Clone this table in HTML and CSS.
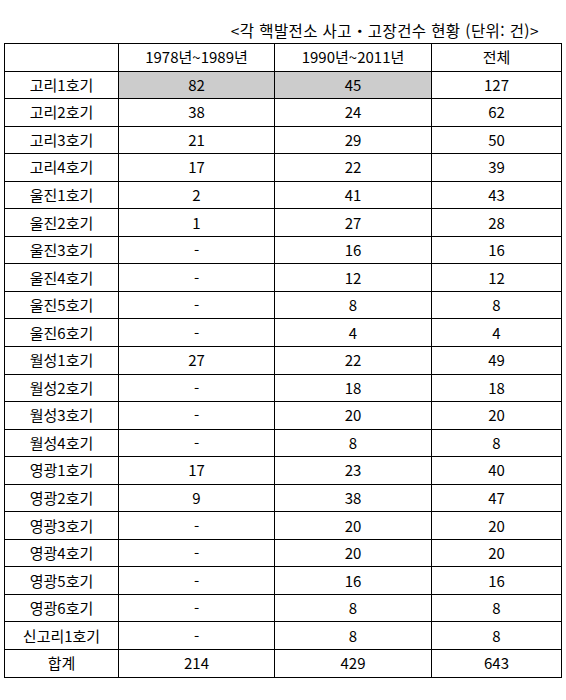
FILE: index.html
```html
<!DOCTYPE html>
<html lang="ko">
<head>
<meta charset="utf-8">
<link rel="stylesheet" href="styles.css">
</head>
<body>
<div class="page">
  <div class="caption">&lt;각 핵발전소 사고・고장건수 현황 (단위: 건)&gt;</div>
  <table class="stats">
    <colgroup>
      <col class="c1"><col class="c2"><col class="c3"><col class="c4">
    </colgroup>
    <tr><td></td><td>1978년~1989년</td><td>1990년~2011년</td><td>전체</td></tr>
    <tr><td>고리1호기</td><td class="hl">82</td><td class="hl">45</td><td>127</td></tr>
    <tr><td>고리2호기</td><td>38</td><td>24</td><td>62</td></tr>
    <tr><td>고리3호기</td><td>21</td><td>29</td><td>50</td></tr>
    <tr><td>고리4호기</td><td>17</td><td>22</td><td>39</td></tr>
    <tr><td>울진1호기</td><td>2</td><td>41</td><td>43</td></tr>
    <tr><td>울진2호기</td><td>1</td><td>27</td><td>28</td></tr>
    <tr><td>울진3호기</td><td>-</td><td>16</td><td>16</td></tr>
    <tr><td>울진4호기</td><td>-</td><td>12</td><td>12</td></tr>
    <tr><td>울진5호기</td><td>-</td><td>8</td><td>8</td></tr>
    <tr><td>울진6호기</td><td>-</td><td>4</td><td>4</td></tr>
    <tr><td>월성1호기</td><td>27</td><td>22</td><td>49</td></tr>
    <tr><td>월성2호기</td><td>-</td><td>18</td><td>18</td></tr>
    <tr><td>월성3호기</td><td>-</td><td>20</td><td>20</td></tr>
    <tr><td>월성4호기</td><td>-</td><td>8</td><td>8</td></tr>
    <tr><td>영광1호기</td><td>17</td><td>23</td><td>40</td></tr>
    <tr><td>영광2호기</td><td>9</td><td>38</td><td>47</td></tr>
    <tr><td>영광3호기</td><td>-</td><td>20</td><td>20</td></tr>
    <tr><td>영광4호기</td><td>-</td><td>20</td><td>20</td></tr>
    <tr><td>영광5호기</td><td>-</td><td>16</td><td>16</td></tr>
    <tr><td>영광6호기</td><td>-</td><td>8</td><td>8</td></tr>
    <tr><td>신고리1호기</td><td>-</td><td>8</td><td>8</td></tr>
    <tr><td>합계</td><td>214</td><td>429</td><td>643</td></tr>
  </table>
</div>
</body>
</html>
```
FILE: styles.css
```css
html, body {
  margin: 0;
  padding: 0;
  background: #ffffff;
}
body {
  font-family: "Noto Sans CJK KR", "Noto Sans", sans-serif;
  font-size: 15px;
  color: #000000;
}
.page {
  display: flex;
  flex-direction: column;
  padding: 20px 0 0 4px;
}
.caption {
  align-self: flex-end;
  padding-right: 27px;
  height: 23px;
  line-height: 20px;
  font-size: 15.5px;
  letter-spacing: 0.4px;
}
.stats {
  border-collapse: collapse;
  table-layout: fixed;
  width: 557px;
}
.stats .c1 { width: 114px; }
.stats .c2 { width: 156px; }
.stats .c3 { width: 157px; }
.stats .c4 { width: 130px; }
.stats tr {
  height: 27.56px;
}
.stats td {
  border: 1px solid #000000;
  padding: 0;
  text-align: center;
  vertical-align: middle;
  line-height: 18px;
}
.stats td.hl {
  background: #cccccc;
}
```
